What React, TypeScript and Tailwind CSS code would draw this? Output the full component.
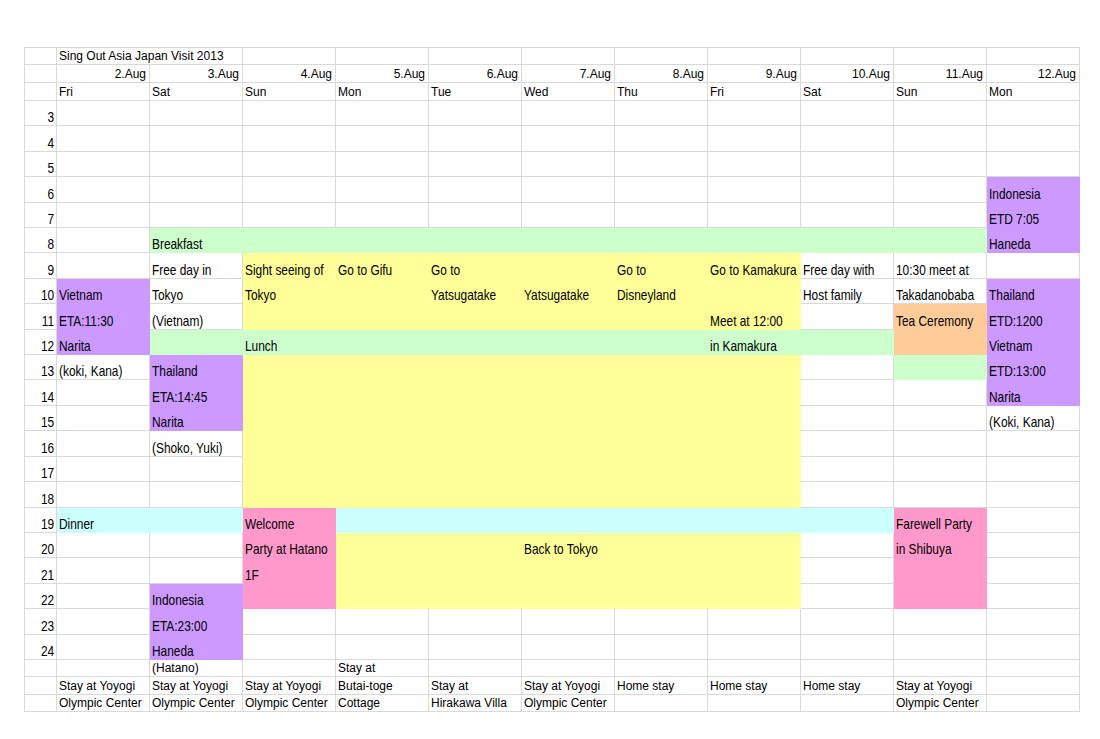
const FILL: Record<string, string> = {
  ".": "bg-white border-[#d9d9d9]",
  G: "bg-[#ccffcc] border-[#ccffcc]",
  Y: "bg-[#ffff99] border-[#ffff99]",
  P: "bg-[#cc99ff] border-[#cc99ff]",
  C: "bg-[#ccffff] border-[#ccffff]",
  K: "bg-[#ff99cc] border-[#ff99cc]",
  O: "bg-[#ffcc99] border-[#ffcc99]",
};

// colour of columns Fri 2.Aug .. Mon 12.Aug, one char per day, for hours 3..24
const fills: Record<number, string> = {
  3: "...........",
  4: "...........",
  5: "...........",
  6: "..........P",
  7: "..........P",
  8: ".GGGGGGGGGP",
  9: "..YYYYYY...",
  10: "P.YYYYYY..P",
  11: "P.YYYYYY.OP",
  12: "PGGGGGGGGOP",
  13: ".PYYYYYY.GP",
  14: ".PYYYYYY..P",
  15: ".PYYYYYY...",
  16: "..YYYYYY...",
  17: "..YYYYYY...",
  18: "..YYYYYY...",
  19: "CCKCCCCCCK.",
  20: "..KYYYYY.K.",
  21: "..KYYYYY.K.",
  22: ".PKYYYYY.K.",
  23: ".P.........",
  24: ".P.........",
};

const notes: Record<string, string> = {
  "6-11": "Indonesia",
  "7-11": "ETD 7:05",
  "8-2": "Breakfast",
  "8-11": "Haneda",
  "9-2": "Free day in",
  "9-3": "Sight seeing of",
  "9-4": "Go to Gifu",
  "9-5": "Go to",
  "9-7": "Go to",
  "9-8": "Go to Kamakura",
  "9-9": "Free day with",
  "9-10": "10:30 meet at",
  "10-1": "Vietnam",
  "10-2": "Tokyo",
  "10-3": "Tokyo",
  "10-5": "Yatsugatake",
  "10-6": "Yatsugatake",
  "10-7": "Disneyland",
  "10-9": "Host family",
  "10-10": "Takadanobaba",
  "10-11": "Thailand",
  "11-1": "ETA:11:30",
  "11-2": "(Vietnam)",
  "11-8": "Meet at 12:00",
  "11-10": "Tea Ceremony",
  "11-11": "ETD:1200",
  "12-1": "Narita",
  "12-3": "Lunch",
  "12-8": "in Kamakura",
  "12-11": "Vietnam",
  "13-1": "(koki, Kana)",
  "13-2": "Thailand",
  "13-11": "ETD:13:00",
  "14-2": "ETA:14:45",
  "14-11": "Narita",
  "15-2": "Narita",
  "15-11": "(Koki, Kana)",
  "16-2": "(Shoko, Yuki)",
  "19-1": "Dinner",
  "19-3": "Welcome",
  "19-10": "Farewell Party",
  "20-3": "Party at Hatano",
  "20-6": "Back to Tokyo",
  "20-10": "in Shibuya",
  "21-3": "1F",
  "22-2": "Indonesia",
  "23-2": "ETA:23:00",
  "24-2": "Haneda",
};

const dates = ["2.Aug", "3.Aug", "4.Aug", "5.Aug", "6.Aug", "7.Aug", "8.Aug", "9.Aug", "10.Aug", "11.Aug", "12.Aug"];
const days = ["Fri", "Sat", "Sun", "Mon", "Tue", "Wed", "Thu", "Fri", "Sat", "Sun", "Mon"];

const stays: string[][] = [
  ["", "(Hatano)", "", "Stay at", "", "", "", "", "", "", ""],
  ["Stay at Yoyogi", "Stay at Yoyogi", "Stay at Yoyogi", "Butai-toge", "Stay at", "Stay at Yoyogi", "Home stay", "Home stay", "Home stay", "Stay at Yoyogi", ""],
  ["Olympic Center", "Olympic Center", "Olympic Center", "Cottage", "Hirakawa Villa", "Olympic Center", "", "", "", "Olympic Center", ""],
];

const hours = Array.from({ length: 22 }, (_, i) => i + 3);

const plain = "flex items-center whitespace-nowrap border-r border-b border-[#d9d9d9] bg-white";
// hour cells use a tall, condensed face (Arial Narrow look): 14.5px squeezed sideways
const hourCell = "flex items-end whitespace-nowrap border-r border-b text-[14.5px] leading-[16px]";
const squeeze = "inline-block scale-x-[0.82]";

export default function App() {
  return (
    <div className="min-h-[739px] bg-white pl-[24px] pt-[47px] font-['Liberation_Sans',Arial,sans-serif] text-[12px] leading-[14px] text-black">
      <div className="grid w-max grid-cols-[32px_repeat(11,93px)] grid-rows-[17px_18px_18px_repeat(22,25.41px)_17.5px_17.5px_17.5px] border-l border-t border-[#d9d9d9]">
        {/* title row */}
        <div className={plain} />
        <div className={`${plain} col-span-2 pl-[2px]`}>Sing Out Asia Japan Visit 2013</div>
        {dates.slice(2).map((d) => (
          <div key={"t" + d} className={plain} />
        ))}

        {/* dates */}
        <div className={plain} />
        {dates.map((d) => (
          <div key={d} className={`${plain} justify-end pr-[3px]`}>
            {d}
          </div>
        ))}

        {/* weekdays */}
        <div className={plain} />
        {days.map((d, i) => (
          <div key={"d" + i} className={`${plain} pl-[2px]`}>
            {d}
          </div>
        ))}

        {/* hours */}
        {hours.map((h) => (
          <HourRow key={h} hour={h} />
        ))}

        {/* where everyone sleeps */}
        {stays.map((row, r) =>
          [<div key={"s" + r} className={plain} />].concat(
            row.map((t, c) => (
              <div key={"s" + r + "-" + c} className={`${plain} pl-[2px]`}>
                {t}
              </div>
            ))
          )
        )}
      </div>
    </div>
  );
}

function HourRow({ hour }: { hour: number }) {
  const row = fills[hour];
  return (
    <>
      <div className={`${hourCell} justify-end border-[#d9d9d9] bg-white pr-[2px]`}>
        <span className={`${squeeze} origin-right`}>{hour}</span>
      </div>
      {row.split("").map((f, i) => {
        const note = notes[`${hour}-${i + 1}`];
        return (
          <div key={i} className={`${hourCell} ${FILL[f]} pl-[2px]`}>
            {note && <span className={`${squeeze} origin-left`}>{note}</span>}
          </div>
        );
      })}
    </>
  );
}
